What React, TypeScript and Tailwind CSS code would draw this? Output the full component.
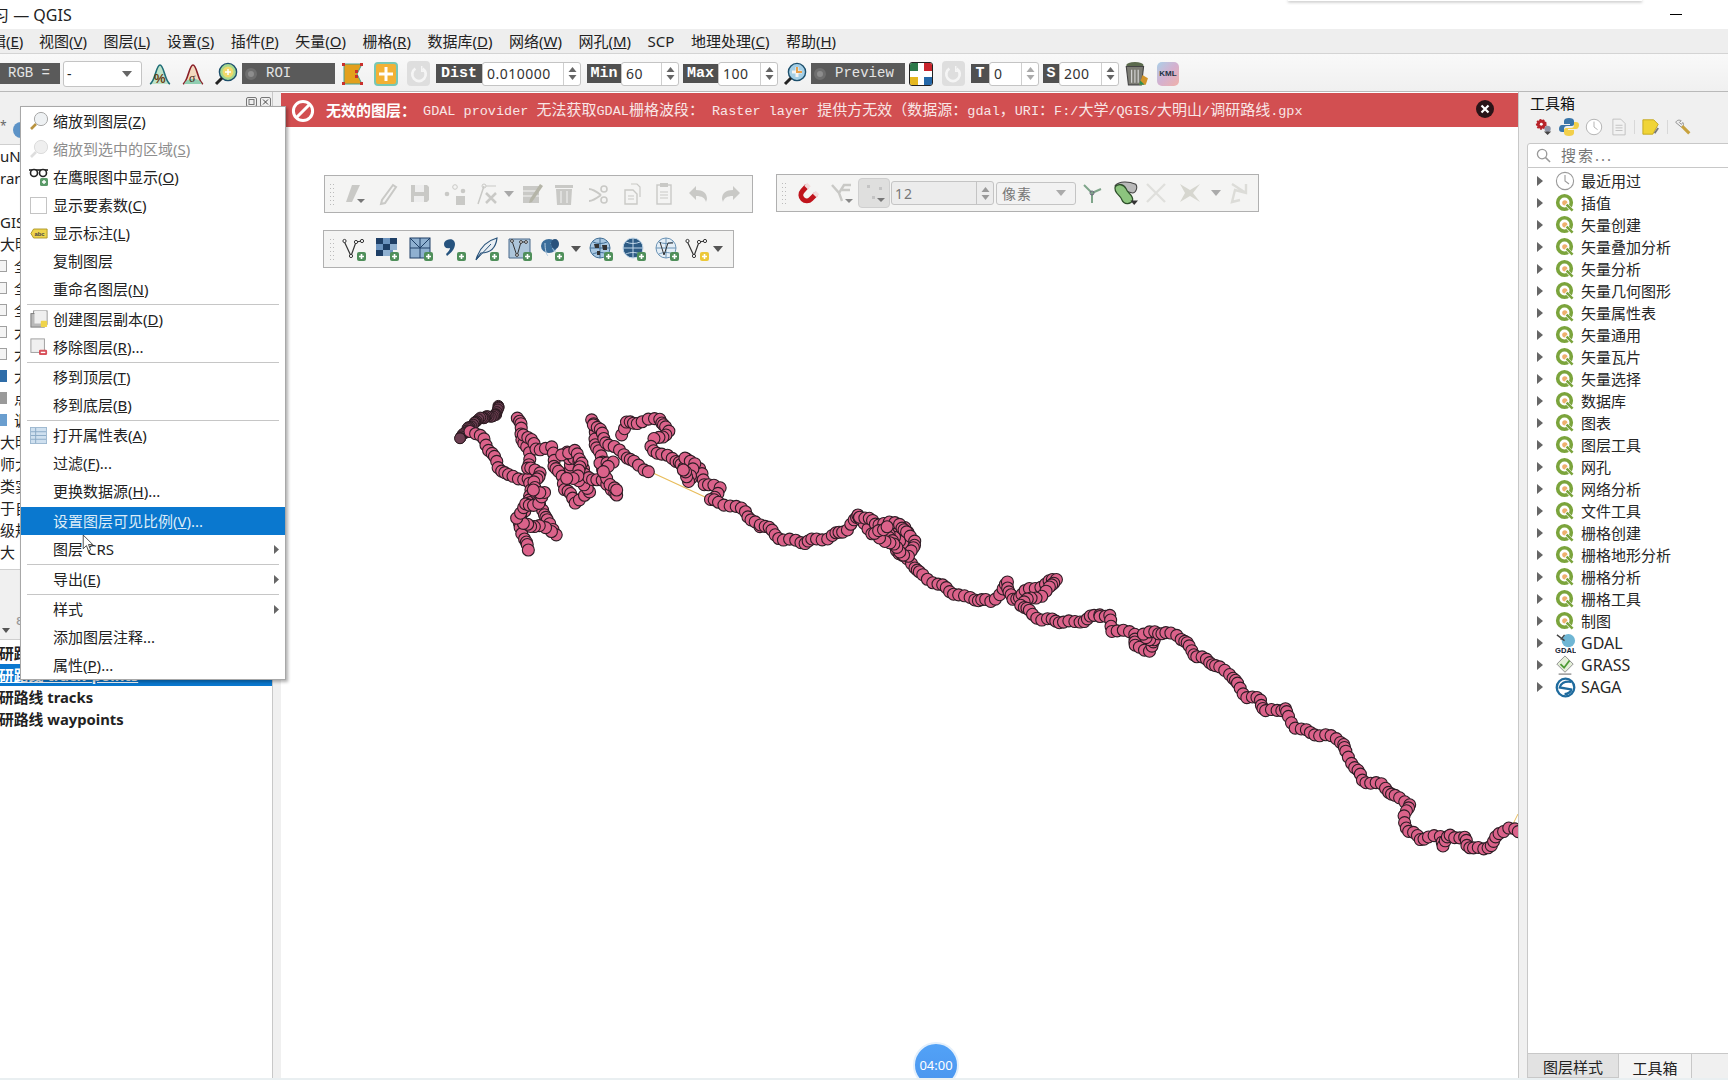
import React from "react";

type P = [number, number];
const z10 = (a: number[]): P[] => { const o: P[] = []; for (let i = 0; i < a.length; i += 2) o.push([440 + a[i] / 3, 390 + a[i + 1] / 3]); return o; };
const z12 = (a: number[]): P[] => { const o: P[] = []; for (let i = 0; i < a.length; i += 2) o.push([1100 + a[i] / 3, 600 + a[i + 1] / 3]); return o; };
const sh = (a: number[]): P[] => { const o: P[] = []; for (let i = 0; i < a.length; i += 2) o.push([a[i] * 1.102, a[i + 1] * 1.102]); return o; };
const dens = (pts: P[], step: number, jit = 0): P[] => {
  const out: P[] = [];
  for (let i = 0; i < pts.length - 1; i++) {
    const [x0, y0] = pts[i]; const [x1, y1] = pts[i + 1];
    const n = Math.max(1, Math.round(Math.hypot(x1 - x0, y1 - y0) / step));
    for (let k = 0; k < n; k++) {
      const t = out.length;
      out.push([x0 + ((x1 - x0) * k) / n + jit * Math.sin(t * 0.9), y0 + ((y1 - y0) * k) / n + jit * Math.cos(t * 1.3)]);
    }
  }
  out.push(pts[pts.length - 1]);
  return out;
};
const darkPts = dens(z10([175, 45, 170, 75, 120, 85, 90, 110, 60, 145]), 1.6, 0.8);
const pinkPaths: P[][] = [
  z10([90, 120, 130, 150, 160, 190, 170, 230, 210, 258, 260, 268, 275, 300, 270, 340, 240, 375, 245, 430, 265, 480]),
  z10([232, 80, 245, 130, 265, 190, 265, 235, 300, 245, 280, 280, 300, 320, 295, 350, 320, 380, 345, 430, 300, 410, 250, 400]),
  z10([230, 380, 255, 345, 300, 340, 310, 310, 280, 300]),
  z10([250, 130, 290, 175, 335, 175, 340, 225, 370, 260, 370, 295, 410, 335, 445, 310, 430, 280, 395, 250, 380, 190, 420, 210, 430, 255, 490, 275, 530, 315]),
  z10([365, 190, 400, 185, 430, 215, 410, 260, 380, 265]),
  z10([455, 85, 470, 160, 490, 240, 510, 280, 530, 300]),
  z10([480, 215, 515, 220, 490, 245]),
  z10([460, 100, 510, 165, 560, 200, 625, 245]),
  z10([545, 130, 555, 100, 610, 95, 655, 85, 690, 125, 640, 150, 635, 170, 665, 195, 720, 215, 750, 260, 745, 205, 775, 240, 795, 280, 840, 295, 810, 330, 870, 345, 915, 365, 960, 410]),
  z10([735, 200, 760, 225, 750, 270, 730, 240]),
  sh([690, 475, 700, 482, 712, 490, 730, 492, 750, 488, 770, 480, 778, 466, 790, 483, 820, 480, 830, 495, 815, 490, 800, 482, 820, 505, 835, 520, 850, 530, 875, 542, 900, 546, 915, 528, 918, 545, 935, 535, 960, 525, 945, 540, 925, 548, 945, 562, 975, 565, 998, 558]),
  sh([780, 468, 795, 475, 815, 475, 830, 490, 825, 505, 810, 495, 795, 485, 805, 478]),
  z12([0, 45, 25, 50, 40, 90, 100, 100, 110, 140, 145, 150, 165, 120, 130, 105, 160, 95, 230, 105, 280, 150, 290, 170, 340, 190, 385, 220, 425, 265, 440, 290, 480, 300, 500, 335, 555, 325, 585, 380, 630, 400, 680, 405, 730, 430, 760, 500, 790, 540, 840, 555, 890, 590, 925, 610, 915, 650, 925, 695, 960, 715, 1020, 710, 1025, 735, 1055, 705, 1090, 715, 1100, 735, 1150, 750, 1190, 715, 1225, 680, 1255, 695]),
];

const Badge = ({ x = 15, y = 15, c = "#4f8f5a" }: { x?: number; y?: number; c?: string }) => (
  <g>
    <rect x={x} y={y} width="9" height="9" rx="2" fill={c} />
    <path d={`M${x + 4.5} ${y + 2}v5M${x + 2} ${y + 4.5}h5`} stroke="#fff" strokeWidth="1.6" />
  </g>
);
const I = ({ children, s = 24 }: { children: React.ReactNode; s?: number }) => (
  <svg viewBox="0 0 24 24" width={s} height={s} className="shrink-0">{children}</svg>
);
const VNode = ({ badge }: { badge: React.ReactNode }) => (
  <I>
    <path d="M2 4l7 15L14 5l6-1" fill="none" stroke="#333" strokeWidth="1.2" />
    <g fill="#fff" stroke="#333" strokeWidth="1"><circle cx="2.5" cy="4" r="1.6" /><circle cx="9" cy="19" r="1.6" /><circle cx="14" cy="5" r="1.6" /><circle cx="20" cy="4" r="1.6" /></g>
    {badge}
  </I>
);
const Globe = ({ c, c2 }: { c: string; c2: string }) => (
  <g>
    <circle cx="11" cy="11" r="10" fill={c} stroke={c2} strokeWidth="1" />
    <path d="M1 11h20M11 1v20M4 5c4 2 10 2 14 0M4 17c4-2 10-2 14 0" fill="none" stroke={c2} strokeWidth="1" />
  </g>
);
const Arrow = ({ c = "#555" }: { c?: string }) => (
  <svg viewBox="0 0 10 6" width="10" height="6" className="shrink-0"><path d="M0 0h10L5 6z" fill={c} /></svg>
);
const QIcon = () => (
  <svg viewBox="0 0 20 20" width="20" height="20" className="shrink-0">
    <circle cx="9.5" cy="9.5" r="6.8" fill="#fff" stroke="#7ba43c" strokeWidth="3.6" />
    <circle cx="9.8" cy="9.8" r="2.6" fill="#eeb06e" />
    <path d="M11 11l6 6.5" stroke="#fff" strokeWidth="3.4" />
    <path d="M11.6 11.6l6 6" stroke="#7ba43c" strokeWidth="2.6" />
  </svg>
);
const Clock = ({ s = 20, c = "#9a9a9a" }: { s?: number; c?: string }) => (
  <svg viewBox="0 0 20 20" width={s} height={s} className="shrink-0">
    <circle cx="10" cy="10" r="8.6" fill="#fff" stroke={c} strokeWidth="1.1" />
    <path d="M10 4v6l4 3" fill="none" stroke={c} strokeWidth="1.1" />
  </svg>
);
const Mag = ({ inner, c = "#a8c8d8" }: { inner?: React.ReactNode; c?: string }) => (
  <I>
    <circle cx="14" cy="10" r="8.6" fill={c} stroke="#1c4f6c" strokeWidth="1.4" />
    {inner}
    <path d="M8 16l-6 6" stroke="#222" strokeWidth="3" />
  </I>
);
const Refresh = () => (
  <div className="w-[23px] h-[25px] rounded-sm bg-[#dedede] flex items-center justify-center">
    <svg viewBox="0 0 20 20" width="18" height="18"><path d="M6 4a7.5 7.5 0 1 0 8 0" fill="none" stroke="#f5f5f5" strokeWidth="3" /><path d="M13 1v6h5" fill="none" stroke="#f5f5f5" strokeWidth="1.6" /></svg>
  </div>
);
const Spin = ({ v, w, dim }: { v: string; w: string; dim?: boolean }) => (
  <div className={`${w} h-[24px] bg-white border border-[#c4c4c4] rounded-[3px] flex items-center text-[14px] text-[#333] shrink-0`}>
    <span className="flex-1 pl-[4px] tracking-[0.5px]">{v}</span>
    <div className="w-[17px] h-full border-l border-[#cfcfcf] flex flex-col items-center justify-center gap-[3px]">
      <svg viewBox="0 0 8 5" width="9" height="5"><path d="M0 5h8L4 0z" fill={dim ? "#aaa" : "#666"} /></svg>
      <svg viewBox="0 0 8 5" width="9" height="5"><path d="M0 0h8L4 5z" fill={dim ? "#aaa" : "#666"} /></svg>
    </div>
  </div>
);
const Lbl = ({ t, w }: { t: string; w: string }) => (
  <div className={`${w} h-[19px] bg-[#505050] text-white font-bold font-['Liberation_Mono',monospace] text-[15px] leading-[19px] text-center overflow-hidden shrink-0`}>{t}</div>
);
const Radio = ({ t, w }: { t: string; w: string }) => (
  <div className={`${w} h-[21px] bg-[#5a5a5a] text-[#e4e4e4] font-['Liberation_Mono',monospace] text-[14px] flex items-center shrink-0`}>
    <span className="w-[12px] h-[12px] rounded-full bg-[#8d8d8d] border-[3px] border-[#6e6e6e] ml-[3px] mr-[9px]" />
    {t}
  </div>
);
const Grip = () => (
  <svg viewBox="0 0 5 24" width="5" height="24" className="shrink-0">
    {[2, 6, 10, 14, 18, 22].map((y) => <g key={y} fill="#bbb"><rect x="0" y={y} width="1" height="1" /><rect x="3" y={y} width="1" height="1" /></g>)}
  </svg>
);

const Cell = ({ children, w = "w-[33px]" }: { children: React.ReactNode; w?: string }) => (
  <div className={`${w} flex items-center justify-center shrink-0`}>{children}</div>
);
const G = "#c9c9c6";

const MenuRow = ({ icon, label, active, dis, sub, top }: { icon?: React.ReactNode; label: React.ReactNode; active?: boolean; dis?: boolean; sub?: boolean; top?: boolean }) => (
  <div className={`h-[28px] flex items-center relative ${top ? "mt-[2px]" : ""} ${active ? "bg-[#0a78cf] text-[#dcecf8]" : dis ? "text-[#8e8e8e]" : "text-[#222]"}`}>
    <div className="w-[32px] flex items-center justify-center pl-[3px]">{icon}</div>
    <span className="text-[15px] leading-none">{label}</span>
    {sub && <svg viewBox="0 0 5 9" width="5" height="9" className="absolute right-[6px] top-[10px]"><path d="M0 0l5 4.5L0 9z" fill="#666" /></svg>}
  </div>
);
const Sep = () => <div className="h-[2px] mx-[6px] flex items-center"><div className="h-px w-full bg-[#c6c6c6]" /></div>;
const MagSmall = ({ dim }: { dim?: boolean }) => (
  <svg viewBox="0 0 20 20" width="20" height="20">
    <circle cx="12" cy="8" r="6.6" fill={dim ? "#efefef" : "#eef1f3"} stroke={dim ? "#dcdcdc" : "#a9a9a9"} />
    <path d="M7 13l-5 5" stroke={dim ? "#dedede" : "#b8923e"} strokeWidth="2.6" />
  </svg>
);

const tree = ["插值", "矢量创建", "矢量叠加分析", "矢量分析", "矢量几何图形", "矢量属性表", "矢量通用", "矢量瓦片", "矢量选择", "数据库", "图表", "图层工具", "网孔", "网络分析", "文件工具", "栅格创建", "栅格地形分析", "栅格分析", "栅格工具", "制图"];
const TreeRow = ({ icon, t, big }: { icon: React.ReactNode; t: string; big?: boolean }) => (
  <div className="h-[22px] flex items-center">
    <svg viewBox="0 0 6 10" width="6" height="10" className="ml-[9px] shrink-0"><path d="M0 0l6 5-6 5z" fill="#666" /></svg>
    <div className="w-[22px] ml-[11px] flex justify-center shrink-0">{icon}</div>
    <span className={`ml-[5px] leading-none text-[#262626] ${big ? "text-[16px]" : "text-[15px]"}`}>{t}</span>
  </div>
);

const menus: [string, string][] = [["视图", "V"], ["图层", "L"], ["设置", "S"], ["插件", "P"], ["矢量", "O"], ["栅格", "R"], ["数据库", "D"], ["网络", "W"], ["网孔", "M"]];
const acc = (a: string, k: string, tail = "") => <>{a}(<u>{k}</u>){tail}</>;

const leftRows: { t?: string; box?: boolean; pad?: boolean; ic?: string }[] = [
  { t: "uNe" }, { t: "rar" }, {}, { t: "GIS" }, { t: "大明" },
  { t: "全", box: true }, { t: "全", box: true }, { t: "全", box: true }, { t: "大", box: true }, { t: "大", box: true },
  { t: "大", ic: "#2f6da8" }, { t: "点", ic: "#9a9a9a" }, { t: "调", ic: "#6a9ecf" },
  { t: "大明" }, { t: "师大" }, { t: "类实" }, { t: "于自" }, { t: "级规" }, { t: "大" },
];

const msg = ["GDAL provider ", "无法获取", "GDAL", "栅格波段\uFF1A", " Raster layer ", "提供方无效\uFF08数据源\uFF1A", "gdal", "\uFF0C", "URI", "\uFF1A", "F:/", "大学", "/QGIS/", "大明山", "/", "调研路线", ".gpx"];

export default function App() {
  return (
    <div className="w-[1728px] h-[1080px] overflow-hidden relative flex flex-col bg-[#f0f0f0] font-['Noto_Sans','Noto_Sans_CJK_SC',sans-serif] text-[#222]">
      {/* title bar */}
      <div className="h-[29px] bg-white flex items-center justify-between shrink-0 text-[16px] leading-none">
        <span className="-ml-[7px]">习 — QGIS</span>
        <div className="flex items-center gap-[46px] -mr-[10px]">
          <div className="w-[12px] h-px bg-black" />
          <div className="w-[10px] h-[10px] border border-black" />
        </div>
      </div>
      {/* menu bar */}
      <div className="h-[25px] bg-[#eeeeee] border-b border-[#d4d4d4] flex items-center gap-[16.5px] text-[15px] leading-none shrink-0 whitespace-nowrap">
        <span className="-ml-[9px] -mr-[1px]">辑(<u>E</u>)</span>
        {menus.map(([a, k]) => <span key={k}>{acc(a, k)}</span>)}
        <span>SCP</span>
        <span>{acc("地理处理", "C")}</span>
        <span>{acc("帮助", "H")}</span>
      </div>
      {/* toolbar */}
      <div className="h-[38px] pt-[2px] bg-gradient-to-b from-[#f9f9f9] to-[#f0f0f0] border-b border-[#b9b9b9] flex items-center shrink-0 whitespace-nowrap">
        <div className="w-[60px] h-[21px] bg-[#5a5a5a] text-[#e4e4e4] font-['Liberation_Mono',monospace] text-[14px] flex items-center pl-[8px] shrink-0">RGB =</div>
        <div className="w-[79px] h-[26px] ml-[3px] bg-white border border-[#c4c4c4] rounded-[3px] flex items-center justify-between pl-[3px] pr-[9px] text-[14px] shrink-0">- <Arrow c="#666" /></div>
        <Cell w="w-[33px] ml-[1px]">
          <I><path d="M2 22C7 20 8 3 12 3s5 17 10 19" fill="#bfe3c9" stroke="#1f6d78" strokeWidth="1.6" /><text x="6" y="21" fontSize="13" fontWeight="700" fill="#6b3d12" fontFamily="Liberation Sans">%</text></I>
        </Cell>
        <Cell>
          <I><path d="M2 22C7 20 8 3 12 3s5 17 10 19" fill="#f3d9c0" stroke="#8a1f28" strokeWidth="1.6" /><path d="M5 19c5-3 9-3 14 0l2 3H3z" fill="#8fcdb0" /><text x="8" y="20" fontSize="12" fill="#4a2a1a" fontFamily="Liberation Serif">σ</text></I>
        </Cell>
        <Cell>
          <Mag c="#a6d88f" inner={<><circle cx="14" cy="10" r="5.5" fill="#f1d96a" /><path d="M14 7v6M11 10h6" stroke="#fff" strokeWidth="1.5" /></>} />
        </Cell>
        <Radio t="ROI" w="w-[93px]" />
        <Cell w="w-[35px]">
          <I><path d="M3 2h18l-5 10 5 10H3z" fill="#e3a01c" stroke="#4b9e8e" strokeWidth="1" /><g fill="#c9302c"><rect x="1" y="1" width="3" height="3" /><rect x="1" y="20" width="3" height="3" /><rect x="19" y="1" width="3" height="3" /><rect x="19" y="20" width="3" height="3" /><rect x="14" y="8" width="3" height="3" /><rect x="14" y="13" width="3" height="3" /></g></I>
        </Cell>
        <Cell w="w-[31px]">
          <div className="w-[24px] h-[24px] rounded-[4px] bg-[#f2b134] border-2 border-[#78c7b4] flex items-center justify-center"><svg viewBox="0 0 14 14" width="14" height="14"><path d="M7 0v14M0 7h14" stroke="#fff" strokeWidth="3" /></svg></div>
        </Cell>
        <Cell w="w-[35px]"><Refresh /></Cell>
        <Lbl t="Dist" w="w-[46px]" />
        <Spin v="0.010000" w="w-[99px]" />
        <div className="w-[6px]" />
        <Lbl t="Min" w="w-[34px]" />
        <Spin v="60" w="w-[58px]" />
        <div className="w-[4px]" />
        <Lbl t="Max" w="w-[35px]" />
        <Spin v="100" w="w-[60px]" />
        <Cell w="w-[33px]">
          <Mag c="#a5cfe6" inner={<><path d="M14 5v10M9 10h10" stroke="#f4f4f4" strokeWidth="3" /><path d="M14 5v5h5" fill="none" stroke="#e8a04c" strokeWidth="2" /></>} />
        </Cell>
        <Radio t="Preview" w="w-[94px]" />
        <Cell w="w-[32px]">
          <div className="w-[24px] h-[24px] rounded-[3px] border border-[#222] grid grid-cols-2 relative overflow-hidden">
            <div className="bg-[#2d7a4a]" /><div className="bg-[#c8242c]" /><div className="bg-[#e5b71f]" /><div className="bg-[#2467a8]" />
            <div className="absolute left-[8px] top-0 bottom-0 w-[6px] bg-white" /><div className="absolute top-[8px] left-0 right-0 h-[6px] bg-white" />
          </div>
        </Cell>
        <Cell w="w-[32px]"><Refresh /></Cell>
        <div className="w-[2px]" />
        <Lbl t="T" w="w-[18px]" />
        <Spin v="0" w="w-[50px]" dim />
        <div className="w-[4px]" />
        <Lbl t="S" w="w-[16px]" />
        <Spin v="200" w="w-[60px]" />
        <Cell w="w-[34px]">
          <I s={26}><ellipse cx="11" cy="4" rx="8" ry="3" fill="#5b6a4d" /><path d="M3 5l2 17h12l2-17z" fill="#7c7c74" stroke="#444" /><path d="M8 8v12M11 8v12M14 8v12" stroke="#ddd" /><path d="M15 22l3-9 5 3-2 6z" fill="#d2942a" /><path d="M16 18l4 4h-5z" fill="#2f8d52" /></I>
        </Cell>
        <Cell w="w-[30px]">
          <div className="w-[22px] h-[24px] rounded-[5px] bg-gradient-to-br from-[#a8cfe8] via-[#d4b0cf] to-[#f0b0a8] flex items-center justify-center text-[8px] font-bold text-[#234] font-['Liberation_Sans']">KML</div>
        </Cell>
      </div>

      {/* main */}
      <div className="flex-1 flex min-h-0">
        {/* left panel */}
        <div className="w-[272px] shrink-0 flex flex-col overflow-hidden whitespace-nowrap">
          <div className="h-[15px] shrink-0" />
          <div className="h-[37px] shrink-0 flex items-center">
            <span className="text-[#666] text-[12px] w-[13px]">*</span>
            <span className="w-[16px] h-[16px] rounded-full bg-[#5d93c7] mt-[8px]" />
          </div>
          <div className="h-[426px] bg-white shrink-0 border-y border-[#cfcfcf] overflow-hidden">
            {leftRows.map((r, i) => (
              <div key={i} className="h-[22px] flex items-center text-[15px] leading-none">
                {r.box && <span className="w-[8px] h-[12px] bg-[#f4f4f4] border border-[#a0a0a0] -ml-px mr-[7px]" />}
                {r.ic && <span className="w-[7px] h-[12px] mr-[7px]" style={{ background: r.ic }} />}
                <span>{r.t}</span>
              </div>
            ))}
          </div>
          <div className="h-[69px] shrink-0 flex items-end pb-[4px] pl-[2px] gap-[6px]">
            <svg viewBox="0 0 8 5" width="8" height="5" className="mb-[2px]"><path d="M0 0h8L4 5z" fill="#555" /></svg>
            <span className="text-[#999] text-[15px] leading-none mb-[8px]">ε</span>
          </div>
          <div className="flex-1 bg-white border-t border-[#cfcfcf] pt-[2px] text-[14.8px] font-bold leading-none">
            <div className="h-[22px] flex items-center -ml-[1px]">研路线 track_segments</div>
            <div className="h-[22px] flex items-center bg-[#0a78cf] text-white"><u className="-ml-[1px]">研路线 track_points</u></div>
            <div className="h-[22px] flex items-center -ml-[1px]">研路线 tracks</div>
            <div className="h-[22px] flex items-center -ml-[1px]">研路线 waypoints</div>
          </div>
        </div>
        <div className="w-[9px] shrink-0 bg-[#f0f0f0] border-l border-[#c8c8c8]" />
        {/* canvas */}
        <div className="w-[1237px] shrink-0 bg-white relative overflow-hidden whitespace-nowrap">
          <svg className="absolute inset-0" width="1237" height="986" viewBox="281 92 1237 986">
            <path d="M653 473l52 24M556 455c2 6 4 11 9 15" fill="none" stroke="#e8bd5c" strokeWidth="1.3" />
            <path d="M1512 826l6-12" fill="none" stroke="#e8bd5c" strokeWidth="1" />
            {darkPts.map(([x, y], i) => <circle key={i} cx={x} cy={y} r="5.4" fill="#6d3f52" stroke="#2a1a20" strokeWidth="1" />)}
            {pinkPaths.map((p, j) => dens(p, 4.8, 1.5).map(([x, y], i) => <circle key={`${j}-${i}`} cx={x} cy={y} r="6" fill="#db628a" stroke="#2c1c24" strokeWidth="1.1" />))}
          </svg>
          {/* message bar */}
          <div className="absolute left-0 right-0 top-[1px] h-[34px] pt-[1px] bg-[#d24f51] text-white flex items-center">
            <svg viewBox="0 0 24 24" width="24" height="24" className="ml-[10px] shrink-0"><circle cx="12" cy="12" r="9.6" fill="none" stroke="#fff" strokeWidth="3" /><path d="M6 18L18 6" stroke="#fff" strokeWidth="3" /></svg>
            <span className="ml-[11px] font-bold text-[15px] leading-none">无效的图层{"\uFF1A"}</span>
            <span className="ml-[7px] leading-none text-[#f8e6e6] font-['Liberation_Mono','Noto_Sans_CJK_SC',monospace] whitespace-pre">
              {msg.map((m, i) => <span key={i} className={/^[\x00-\x7f]+$/.test(m) ? "text-[13.5px]" : "text-[15px]"}>{m}</span>)}
            </span>
            <div className="absolute right-[24px] top-[7px] w-[18px] h-[18px] rounded-full bg-[#2a1418] flex items-center justify-center">
              <svg viewBox="0 0 10 10" width="10" height="10"><path d="M1.5 1.5l7 7M8.5 1.5l-7 7" stroke="#fff" strokeWidth="2.2" /></svg>
            </div>
          </div>
          {/* floating toolbar 1 */}
          <div className="absolute left-[43px] top-[83px] w-[429px] h-[38px] bg-[#f4f4f3] border border-[#b0b0b0] flex items-center pl-[5px]">
            <Grip />
            <Cell w="w-[38px] ml-[1px]"><I><path d="M9 3h8l-8 17H3z" fill={G} /><path d="M14 17h8l-4 4z" fill="#777" /></I></Cell>
            <Cell w="w-[27px]"><I><path d="M17 3l3 2L9 21l-4 1 1-4z" fill="none" stroke={G} strokeWidth="2" /></I></Cell>
            <Cell w="w-[38px]"><I><path d="M3 3h16l2 2v13l-2 2H3z" fill={G} /><rect x="7" y="3" width="9" height="7" fill="#eee" /><rect x="6" y="14" width="10" height="6" fill="#eee" /></I></Cell>
            <Cell w="w-[32px]"><I><circle cx="4" cy="12" r="2.3" fill={G} /><circle cx="12" cy="5" r="2.3" fill="none" stroke={G} /><circle cx="20" cy="9" r="2.3" fill={G} /><rect x="13" y="14" width="9" height="9" fill={G} /></I></Cell>
            <Cell w="w-[30px]"><I><path d="M4 22L10 4" stroke={G} strokeWidth="1.5" /><circle cx="10" cy="4" r="2" fill="none" stroke={G} /><path d="M12 4h10" stroke={G} /><path d="M12 11l10 10M22 11L12 21" stroke={G} strokeWidth="2.5" /></I></Cell>
            <Cell w="w-[16px]"><Arrow c="#a8a8a8" /></Cell>
            <Cell w="w-[30px]"><I><path d="M3 4h16v17H3z" fill={G} /><path d="M3 9h16M3 14h16" stroke="#f4f4f3" /><path d="M20 2l3 2-11 16-3 1 1-4z" fill="#b5b5a8" /></I></Cell>
            <Cell w="w-[34px]"><I><path d="M4 7h16l-1 16H5z" fill={G} /><rect x="3" y="3" width="18" height="3" fill={G} /><path d="M9 9v12M15 9v12" stroke="#f4f4f3" /></I></Cell>
            <Cell w="w-[34px]"><I><path d="M3 7c4 0 8 3 12 6M3 19c4 0 8-3 12-6" fill="none" stroke={G} strokeWidth="2" /><circle cx="18" cy="7" r="3" fill="none" stroke={G} strokeWidth="1.6" /><circle cx="18" cy="18" r="3" fill="none" stroke={G} strokeWidth="1.6" /></I></Cell>
            <Cell w="w-[32px]"><I><path d="M6 8h8l4 4v10H6z" fill="none" stroke={G} strokeWidth="1.4" /><path d="M12 2h6l3 3v10" fill="none" stroke={G} strokeWidth="1.2" /><path d="M9 14h6M9 17h6" stroke={G} /></I></Cell>
            <Cell w="w-[34px]"><I><rect x="5" y="3" width="14" height="19" fill="none" stroke={G} strokeWidth="1.4" /><rect x="8" y="1" width="8" height="4" fill={G} /><path d="M8 10h8M8 13h8M8 16h8" stroke={G} /></I></Cell>
            <Cell w="w-[33px]"><I><path d="M3 11l7-7v4c7 0 11 3 11 9l-1 3c-1-4-4-6-10-6v4z" fill={G} /></I></Cell>
            <Cell w="w-[33px]"><I><path d="M21 11l-7-7v4C7 8 3 11 3 17l1 3c1-4 4-6 10-6v4z" fill={G} /></I></Cell>
          </div>
          {/* floating toolbar 2 */}
          <div className="absolute left-[42px] top-[138px] w-[411px] h-[38px] bg-[#f4f4f3] border border-[#b0b0b0] flex items-center pl-[6px]">
            <Grip />
            <Cell w="w-[33px] ml-[2px]"><VNode badge={<Badge />} /></Cell>
            <Cell><I><rect x="1" y="1" width="7" height="6" fill="#1e3f66" /><rect x="8" y="1" width="7" height="6" fill="#6c94bf" /><rect x="15" y="1" width="7" height="6" fill="#1e3f66" /><rect x="1" y="7" width="7" height="6" fill="#6c94bf" /><rect x="8" y="7" width="7" height="6" fill="#1e3f66" /><rect x="15" y="7" width="7" height="6" fill="#8fb0d0" /><rect x="1" y="13" width="7" height="6" fill="#1e3f66" /><rect x="8" y="13" width="7" height="6" fill="#8fb0d0" /><rect x="15" y="13" width="3" height="6" fill="#6c94bf" /><Badge /></I></Cell>
            <Cell w="w-[35px]"><I><rect x="1" y="1" width="20" height="20" fill="#8fb0d0" stroke="#1e3f66" /><path d="M1 11h20M11 1v20M1 1l10 10M11 11L21 1" stroke="#1e3f66" /><Badge /></I></Cell>
            <Cell w="w-[32px]"><I><path d="M5 3c4-2 8 0 8 4 0 5-4 9-8 12l-1-2c2-2 4-4 4-6-4 1-6-1-6-4 0-2 1-3 3-4z" fill="#26537e" /><Badge /></I></Cell>
            <Cell w="w-[33px]"><I><path d="M1 23C4 12 11 4 22 1c-1 9-6 15-16 15z" fill="#e8eef3" stroke="#29537a" strokeWidth="1.2" /><path d="M1 23L16 7" stroke="#29537a" /><Badge /></I></Cell>
            <Cell><I><path d="M1 2h21v19H1z" fill="#aec6da" stroke="#48698a" /><path d="M4 4l5 15 4-14 5 0" fill="none" stroke="#333" /><g fill="#fff" stroke="#333"><circle cx="4" cy="4" r="1.4" /><circle cx="9" cy="18" r="1.4" /><circle cx="13" cy="5" r="1.4" /><circle cx="18" cy="5" r="1.4" /></g><Badge /></I></Cell>
            <Cell w="w-[31px]"><I><ellipse cx="9" cy="9" rx="8" ry="7" fill="#3a6d9a" /><path d="M5 6c0 6 1 11 3 13M11 6c2 5 2 9 5 8" stroke="#b7cfe3" fill="none" /><ellipse cx="15" cy="7" rx="4" ry="5" fill="#2a527c" /><Badge /></I></Cell>
            <Cell w="w-[17px]"><Arrow /></Cell>
            <Cell w="w-[33px]"><I><Globe c="#a9c8e2" c2="#426f95" /><path d="M5 7h5v4H6zM13 8h5v5h-4zM8 14h3v4H8z" fill="#333" /><Badge /></I></Cell>
            <Cell w="w-[33px]"><I><Globe c="#2d5b84" c2="#c0d6e8" /><Badge /></I></Cell>
            <Cell><I><Globe c="#e4eef6" c2="#6a93b5" /><path d="M5 5l4 13 4-12 5 0" fill="none" stroke="#333" /><Badge /></I></Cell>
            <Cell w="w-[28px]"><VNode badge={<Badge c="#ecc838" />} /></Cell>
            <Cell w="w-[14px]"><Arrow /></Cell>
          </div>
          {/* floating toolbar 3 */}
          <div className="absolute left-[495px] top-[82px] w-[483px] h-[38px] bg-[#f4f4f3] border border-[#b0b0b0] flex items-center pl-[5px]">
            <Grip />
            <Cell w="w-[33px] ml-[5px]"><I><path d="M10 5L5.500 10A5.500 5.500 0 0 0 14 18L19 13" fill="none" stroke="#c0141c" strokeWidth="5" /><path d="M12 3.500L9 6.500M20.500 11.500L17.500 14.500" stroke="#f2dcdc" strokeWidth="5" /></I></Cell>
            <Cell w="w-[33px]"><I><path d="M2 4l7 8 3 8M9 12l5-8h7M12 9h8" fill="none" stroke={G} strokeWidth="2.4" /><path d="M15 18h8l-4 4z" fill="#888" /></I></Cell>
            <Cell w="w-[32px]">
              <div className="w-[32px] h-[30px] bg-[#dfdfde] border border-[#cfcfcf] rounded-sm flex items-center justify-center">
                <I><g fill="#c4c4c4"><rect x="5" y="4" width="3" height="3" /><rect x="17" y="6" width="3" height="3" /><rect x="10" y="15" width="3" height="3" /></g><path d="M15 17h8l-4 4z" fill="#777" /></I>
              </div>
            </Cell>
            <div className="ml-[1px] w-[103px] h-[24px] bg-[#ececec] border border-[#c4c4c4] rounded-[3px] flex items-center text-[14px] text-[#777] shrink-0 tracking-[1px]">
              <span className="flex-1 pl-[3px]">12</span>
              <div className="w-[17px] h-full border-l border-[#c4c4c4] flex flex-col items-center justify-center gap-[3px]">
                <svg viewBox="0 0 8 5" width="9" height="5"><path d="M0 5h8L4 0z" fill="#999" /></svg>
                <svg viewBox="0 0 8 5" width="9" height="5"><path d="M0 0h8L4 5z" fill="#999" /></svg>
              </div>
            </div>
            <div className="ml-[2px] w-[80px] h-[23px] bg-[#f2f2f2] border border-[#c4c4c4] rounded-[3px] flex items-center justify-between pl-[5px] pr-[9px] text-[14px] text-[#777] shrink-0 tracking-[1px]">像素 <Arrow c="#aaa" /></div>
            <Cell w="w-[30px] ml-[1px]"><I><path d="M12 12L4 4M12 12l9-4M12 12v10" stroke="#7fa58a" strokeWidth="2" fill="none" /><circle cx="12" cy="12" r="2" fill="none" stroke="#667" /></I></Cell>
            <Cell w="w-[36px]"><I s={26}><path d="M3 5c4-4 12-4 19-1 2 3 0 8-3 8l-8-2z" fill="#b9b9b9" stroke="#444" /><path d="M3 6c3-3 8-2 10 2 1 4 7 6 6 11-2 4-8 4-10-1-1-4-8-6-6-12z" fill="#8cc47e" stroke="#2d4f2a" strokeWidth="1.2" /><path d="M17 19h7l-3.500 4z" fill="#333" /></I></Cell>
            <Cell w="w-[26px]"><I><path d="M3 3l18 18M21 3L3 21" stroke="#dfdfdc" strokeWidth="2.4" /></I></Cell>
            <Cell w="w-[42px]"><I><path d="M2 3l10 6 10-6-7 9 7 9-10-6-10 6 5-9z" fill="#d6d6cf" /></I></Cell>
            <Cell w="w-[10px]"><Arrow c="#aaa" /></Cell>
            <Cell w="w-[36px]"><I><path d="M5 3l14 9M19 3v9L8 9l-3 12 8-2" fill="none" stroke="#dcdcd8" strokeWidth="2.4" /></I></Cell>
          </div>
          {/* timer */}
          <div className="absolute left-[632px] top-[950px] w-[46px] h-[46px] rounded-full bg-gradient-to-b from-[#52a2f7] to-[#4b95ee] border-[2px] border-[#e4f0fc] flex items-center justify-center text-[13px] text-white leading-none">04:00</div>
        </div>
        <div className="w-[9px] shrink-0 bg-[#f0f0f0] border-l border-[#c8c8c8]" />
        {/* right panel */}
        <div className="flex-1 min-w-0 flex flex-col whitespace-nowrap">
          <div className="h-[23px] shrink-0 flex items-center pl-[3px] text-[15px] leading-none text-[#111]">工具箱</div>
          <div className="h-[28px] shrink-0 flex items-center pl-[5px] pb-[4px]">
            <Cell w="w-[24px]"><svg viewBox="0 0 20 20" width="18" height="18"><circle cx="7" cy="7" r="5" fill="#b8232a" stroke="#b8232a" strokeDasharray="2 1.500" strokeWidth="2" /><circle cx="7" cy="7" r="1.600" fill="#fff" /><circle cx="14" cy="12" r="3.500" fill="#8d93a5" /><path d="M10 15h8l-4 4z" fill="#444" /></svg></Cell>
            <Cell w="w-[26px]"><svg viewBox="0 0 20 20" width="20" height="20"><path d="M10 1c-3 0-5 1-5 3v3h6v1H3c-2 0-3 2-3 4s1 3 3 3h2v-3c0-2 1-3 3-3h5c1 0 2-1 2-2V4c0-2-2-3-5-3z" fill="#3a75a8" /><path d="M10 19c3 0 5-1 5-3v-3H9v-1h8c2 0 3-2 3-4s-1-3-3-3h-2v3c0 2-1 3-3 3H7c-1 0-2 1-2 2v3c0 2 2 3 5 3z" fill="#f2cf4a" /></svg></Cell>
            <Cell w="w-[24px]"><Clock s={18} c="#b4b4b4" /></Cell>
            <Cell w="w-[26px]"><svg viewBox="0 0 16 20" width="14" height="18"><path d="M1 1h9l5 5v13H1z" fill="#f2f2f2" stroke="#bdbdbd" /><path d="M4 8h8M4 11h8M4 14h8" stroke="#bdbdbd" /></svg></Cell>
            <div className="w-px h-[14px] bg-[#d8d8d8] mx-[2px]" />
            <Cell w="w-[28px]"><svg viewBox="0 0 20 20" width="18" height="18"><path d="M1 2h12l5 5-6 11H1z" fill="#f0d437" stroke="#c2a61c" /><path d="M14 17l4-6" stroke="#777" strokeWidth="2" /></svg></Cell>
            <div className="w-px h-[14px] bg-[#d8d8d8] mx-[2px]" />
            <Cell w="w-[26px]"><svg viewBox="0 0 20 20" width="18" height="18"><path d="M2 5c1-3 4-3 6-2L6 5l2 2 2-2c1 2 1 4-2 5z" fill="#eee" stroke="#888" /><path d="M9 9l8 8" stroke="#c8a23e" strokeWidth="3.500" /></svg></Cell>
          </div>
          <div className="h-[25px] shrink-0 bg-white border border-[#c8c8c8] rounded-t-[3px] -mr-[4px] flex items-center">
            <svg viewBox="0 0 16 16" width="15" height="15" className="ml-[8px]"><circle cx="6.500" cy="6.500" r="5" fill="none" stroke="#999" strokeWidth="1.4" /><path d="M10 10l5 5" stroke="#999" strokeWidth="1.6" /></svg>
            <span className="ml-[10px] text-[15px] text-[#777] tracking-[2px] leading-none">搜索...</span>
          </div>
          <div className="flex-1 bg-white border-x border-b border-[#c8c8c8] -mr-[4px] pt-[2px] min-h-0">
            <TreeRow icon={<Clock />} t="最近用过" />
            {tree.map((t) => <TreeRow key={t} icon={<QIcon />} t={t} />)}
            <TreeRow big t="GDAL" icon={<svg viewBox="0 0 22 22" width="21" height="21"><circle cx="14" cy="8" r="7" fill="#6fb6d4" /><path d="M2 2l8 6M6 7l4-5" stroke="#444" strokeWidth="1.4" /><text x="0" y="21" fontSize="8" fontWeight="700" fill="#123" fontFamily="Liberation Sans">GDAL</text></svg>} />
            <TreeRow big t="GRASS" icon={<svg viewBox="0 0 22 22" width="20" height="20"><path d="M11 1l9 9-9 9-9-9z" fill="#e4efd8" stroke="#888" /><path d="M6 10l4 4 6-8" fill="none" stroke="#4e9a35" strokeWidth="2" /><path d="M4 21h14" stroke="#555" /></svg>} />
            <TreeRow big t="SAGA" icon={<svg viewBox="0 0 22 22" width="21" height="21"><circle cx="11" cy="11" r="9.200" fill="#fff" stroke="#1f6b9e" strokeWidth="2.400" /><path d="M17 5C10 4 6 7 5 11l12 2c0 2-3 5-7 5" fill="none" stroke="#1f6b9e" strokeWidth="2.400" /></svg>} />
          </div>
          <div className="h-[24px] shrink-0 flex text-[15px] leading-none">
            <div className="w-[92px] pt-[4px] bg-[#e2e2e2] border-x border-b border-[#c8c8c8] flex items-center justify-center">图层样式</div>
            <div className="w-[73px] pt-[4px] bg-[#f4f4f4] border-r border-[#c8c8c8] flex items-center justify-center">工具箱</div>
          </div>
        </div>
      </div>
      <div className="h-[2px] bg-[#e9eff1] shrink-0" />

      {/* dock buttons of the left panel, above the panel */}
      <div className="absolute left-[246px] top-[97px] flex gap-[3px]">
        <svg viewBox="0 0 11 10" width="11" height="10"><rect x=".5" y=".5" width="10" height="9" rx="1.500" fill="none" stroke="#777" /><rect x="3" y="2.500" width="5" height="5" fill="none" stroke="#777" /></svg>
        <svg viewBox="0 0 11 10" width="11" height="10"><rect x=".5" y=".5" width="10" height="9" rx="1.500" fill="none" stroke="#777" /><path d="M3 2.500l5 5M8 2.500l-5 5" stroke="#444" /></svg>
      </div>

      {/* context menu */}
      <div className="absolute left-[20px] top-[106px] w-[266px] bg-white border border-[#a8a8a8] shadow-[2px_2px_3px_rgba(0,0,0,0.3)] whitespace-nowrap">
        <MenuRow icon={<MagSmall />} label={acc("缩放到图层", "Z")} />
        <MenuRow dis icon={<MagSmall dim />} label={acc("缩放到选中的区域", "S")} />
        <MenuRow icon={<svg viewBox="0 0 20 20" width="20" height="20"><path d="M0 3h19" stroke="#222" strokeWidth="1.600" /><circle cx="5" cy="6" r="3.500" fill="#fff" stroke="#222" strokeWidth="1.600" /><circle cx="14" cy="6" r="3.500" fill="#fff" stroke="#222" strokeWidth="1.600" /><rect x="11" y="11" width="8" height="8" rx="1.500" fill="#5a9a68" /><path d="M15 13v4M13 15h4" stroke="#fff" strokeWidth="1.400" /></svg>} label={acc("在鹰眼图中显示", "O")} />
        <MenuRow icon={<span className="w-[17px] h-[17px] border border-[#c4c4c4] bg-white block" />} label={acc("显示要素数", "C")} />
        <MenuRow icon={<svg viewBox="0 0 20 12" width="18" height="11"><path d="M4 1h15v10H4L1 6z" fill="#efd44b" stroke="#aa9424" /><text x="5" y="8.500" fontSize="6.500" fontWeight="700" fill="#444" fontFamily="Liberation Sans">abc</text></svg>} label={acc("显示标注", "L")} />
        <MenuRow label="复制图层" />
        <MenuRow label={acc("重命名图层", "N")} />
        <Sep />
        <MenuRow icon={<svg viewBox="0 0 20 20" width="18" height="18"><rect x="4" y="1" width="15" height="15" fill="#f2f2f2" stroke="#888" /><rect x="1" y="4" width="15" height="15" fill="#b9b9b9" stroke="#777" /><rect x="5" y="1" width="13" height="14" fill="#efefef" /><rect x="12" y="12" width="7" height="7" rx="1" fill="#efd44b" /></svg>} label={acc("创建图层副本", "D")} />
        <MenuRow icon={<svg viewBox="0 0 20 20" width="18" height="18"><rect x="1" y="1" width="15" height="15" fill="#f0f0f0" stroke="#999" /><rect x="10" y="13" width="9" height="6" rx="1.500" fill="#d8505a" /><path d="M12 16h5" stroke="#fff" strokeWidth="1.500" /></svg>} label={acc("移除图层", "R", "...")} />
        <Sep />
        <MenuRow label={acc("移到顶层", "T")} />
        <MenuRow label={acc("移到底层", "B")} />
        <Sep />
        <MenuRow icon={<svg viewBox="0 0 18 18" width="17" height="17"><rect x=".5" y=".5" width="17" height="17" fill="#cfe0ef" stroke="#9db8d0" /><path d="M1 5h16M1 9h16M1 13h16M6 1v16" stroke="#8aa9c6" /></svg>} label={acc("打开属性表", "A")} />
        <MenuRow label={acc("过滤", "F", "...")} />
        <MenuRow label={acc("更换数据源", "H", "...")} />
        <MenuRow top active label={acc("设置图层可见比例", "V", "...")} />
        <MenuRow label="图层 CRS" sub />
        <Sep />
        <MenuRow label={acc("导出", "E")} sub />
        <Sep />
        <MenuRow label="样式" sub />
        <MenuRow label="添加图层注释..." />
        <MenuRow label={acc("属性", "P", "...")} />
      </div>

      {/* mouse pointer */}
      <svg viewBox="0 0 12 18" width="13" height="19" className="absolute left-[82px] top-[534px]"><path d="M1 1v13l3-3 2 5 2-1-2-5h4z" fill="#fff" stroke="#333" strokeWidth=".8" /></svg>

      {/* edge of a window lying above the top of the screen */}
      <div className="absolute left-[1288px] top-0 w-[354px] h-[1px] bg-white shadow-[0_1px_3px_rgba(0,0,0,0.5)]" />
    </div>
  );
}
